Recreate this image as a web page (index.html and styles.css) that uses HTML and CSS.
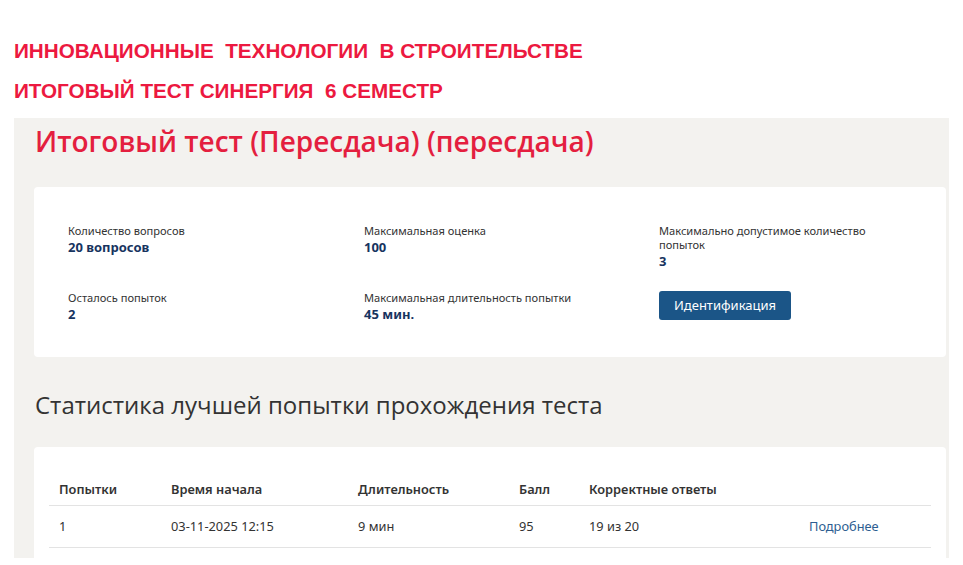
FILE: index.html
```html
<!DOCTYPE html>
<html lang="ru">
<head>
<meta charset="utf-8">
<title>Итоговый тест</title>
<link rel="stylesheet" href="styles.css">
</head>
<body>
<header class="top">
  <div class="top-line">ИННОВАЦИОННЫЕ  ТЕХНОЛОГИИ  В СТРОИТЕЛЬСТВЕ</div>
  <div class="top-line">ИТОГОВЫЙ ТЕСТ СИНЕРГИЯ  6 СЕМЕСТР</div>
</header>
<main class="panel">
  <h1 class="title">Итоговый тест (Пересдача) (пересдача)</h1>
  <section class="card info">
    <div class="info-item">
      <div class="info-label">Количество вопросов</div>
      <div class="info-value">20 вопросов</div>
    </div>
    <div class="info-item">
      <div class="info-label">Максимальная оценка</div>
      <div class="info-value">100</div>
    </div>
    <div class="info-item narrow">
      <div class="info-label">Максимально допустимое количество попыток</div>
      <div class="info-value">3</div>
    </div>
    <div class="info-item">
      <div class="info-label">Осталось попыток</div>
      <div class="info-value">2</div>
    </div>
    <div class="info-item">
      <div class="info-label">Максимальная длительность попытки</div>
      <div class="info-value">45 мин.</div>
    </div>
    <div class="info-item">
      <button class="btn">Идентификация</button>
    </div>
  </section>
  <h2 class="subtitle">Статистика лучшей попытки прохождения теста</h2>
  <section class="card stats">
    <table class="tbl">
      <thead>
        <tr>
          <th class="c1">Попытки</th>
          <th class="c2">Время начала</th>
          <th class="c3">Длительность</th>
          <th class="c4">Балл</th>
          <th class="c5">Корректные ответы</th>
          <th class="c6"></th>
        </tr>
      </thead>
      <tbody>
        <tr>
          <td>1</td>
          <td>03-11-2025 12:15</td>
          <td>9 мин</td>
          <td>95</td>
          <td>19 из 20</td>
          <td><a class="link" href="#">Подробнее</a></td>
        </tr>
      </tbody>
    </table>
  </section>
</main>
</body>
</html>
```
FILE: styles.css
```css
* { box-sizing: border-box; }
html, body { margin: 0; padding: 0; background: #ffffff; }
body {
  width: 963px;
  height: 565px;
  overflow: hidden;
  font-family: "Open Sans", "Noto Sans", sans-serif;
}
.top {
  padding: 40px 0 0 14px;
  height: 118px;
}
.top-line {
  font-family: "Liberation Sans", Arial, sans-serif;
  font-weight: bold;
  font-size: 20.7px;
  line-height: 21px;
  color: #ec1940;
  white-space: pre;
  margin-bottom: 19px;
}
.panel {
  margin-left: 14px;
  width: 935px;
  height: 440px;
  background: #f3f2ef;
  padding: 3px 3px 0 20px;
}
.title {
  margin: 0 0 26px 1px;
  font-family: "Open Sans", sans-serif;
  font-weight: 600;
  font-size: 28px;
  line-height: 40px;
  color: #e41f3f;
}
.card {
  background: #ffffff;
  border-radius: 4px;
}
.info {
  display: grid;
  grid-template-columns: 296px 295px 230px;
  row-gap: 21px;
  padding: 37px 0 34px 34px;
}
.info-label {
  font-family: "Noto Sans", sans-serif;
  font-size: 11.1px;
  line-height: 14px;
  color: #333333;
}
.info-value {
  font-family: "Noto Sans", sans-serif;
  font-weight: 700;
  font-size: 13px;
  line-height: 18px;
  color: #17345f;
}
.btn {
  display: block;
  height: 29px;
  padding: 0 15px;
  border: none;
  border-radius: 3px;
  background: #1b5587;
  color: #ffffff;
  font-family: "Noto Sans", sans-serif;
  font-size: 13px;
  line-height: 29px;
}
.subtitle {
  margin: 32px 0 26px 1px;
  font-family: "Open Sans", sans-serif;
  font-weight: 400;
  font-size: 24px;
  line-height: 32px;
  color: #333333;
}
.stats {
  padding: 27px 15px 0 15px;
  height: 120px;
}
.tbl {
  width: 100%;
  border-collapse: collapse;
  font-family: "Noto Sans", sans-serif;
  font-size: 12.8px;
  color: #333333;
}
.tbl th {
  text-align: left;
  font-weight: 600;
  height: 31px;
  padding: 0 10px;
  border-bottom: 1px solid #e3e3e3;
}
.tbl td {
  height: 42px;
  padding: 0 10px;
  border-bottom: 1px solid #e3e3e3;
}
.c1 { width: 112px; }
.c2 { width: 187px; }
.c3 { width: 161px; }
.c4 { width: 70px; }
.c5 { width: 220px; }
.link {
  color: #2d5e91;
  text-decoration: none;
}
```
